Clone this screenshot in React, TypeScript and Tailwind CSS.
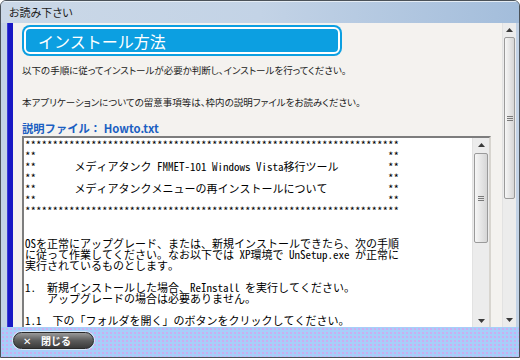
import React from 'react';

const JP = "font-['Noto_Sans_CJK_JP',sans-serif]";
const MONO = "font-['Noto_Sans_Mono_CJK_JP','Noto_Sans_CJK_JP',monospace]";

// 全角を2桁として数える
const cols = (s: string) => [...s].reduce((n, c) => n + (c.charCodeAt(0) < 0x100 ? 1 : 2), 0);
const framed = (s = '') =>
    s ? '**' + ' '.repeat(7) + s + ' '.repeat(57 - cols(s)) + '**' : '**' + ' '.repeat(64) + '**';

const LINES = [
    '*'.repeat(68),
    framed(),
    framed('メディアタンク FMMET-101 Windows Vista移行ツール'),
    framed(),
    framed('メディアタンクメニューの再インストールについて'),
    framed(),
    '*'.repeat(68),
    '',
    '',
    'OSを正常にアップグレード、または、新規インストールできたら、次の手順',
    'に従って作業してください。なお以下では XP環境で UnSetup.exe が正常に',
    '実行されているものとします。',
    '',
    '1.  新規インストールした場合、ReInstall を実行してください。',
    '    アップグレードの場合は必要ありません。',
    '',
    '1.1  下の「フォルダを開く」のボタンをクリックしてください。',
];

function Tri({ up }: { up?: boolean }) {
    return (
        <svg width="7" height="4" viewBox="0 0 7 4">
            <polygon points={up ? '0,4 7,4 3.5,0' : '0,0 7,0 3.5,4'} fill="#3a3a3a" />
        </svg>
    );
}

function Grip() {
    return (
        <div className="flex flex-col gap-[1px] w-[6px]">
            <div className="h-[1px] bg-[#7a7a7a]" />
            <div className="h-[1px] bg-[#7a7a7a]" />
            <div className="h-[1px] bg-[#7a7a7a]" />
        </div>
    );
}

function ScrollBar({ width, thumbTop, thumbHeight, showDown = true }: { width: number; thumbTop: number; thumbHeight: number; showDown?: boolean }) {
    return (
        <div className="h-full flex flex-col bg-[#ececec] border-l border-[#e2e2e2]" style={{ width }}>
            <div className="h-[14px] flex items-center justify-center shrink-0">
                <Tri up />
            </div>
            <div className="flex-1 relative px-[1px]">
                <div
                    className="absolute left-[1px] right-[1px] rounded-[2px] border border-[#9a9a9a] bg-gradient-to-r from-[#f6f6f6] to-[#d6d6d6] flex items-center justify-center"
                    style={{ top: thumbTop, height: thumbHeight }}
                >
                    <Grip />
                </div>
            </div>
            {showDown && (
                <div className="h-[14px] flex items-center justify-center shrink-0">
                    <Tri />
                </div>
            )}
        </div>
    );
}

export default function App() {
    return (
        <div className={`w-[520px] h-[360px] bg-white overflow-hidden ${JP}`}>
            <div className="w-[520px] h-[358px] border border-[#4b5259] rounded-t-[6px] flex flex-col overflow-hidden bg-[#c3d3e6]">

                {/* タイトルバー */}
                <div className="h-[22px] shrink-0 flex items-center pl-[8px] bg-gradient-to-r from-[#cbd8e7] via-[#c3d3e6] to-[#a3bddb] border-t border-[#e4ecf4]">
                    <span className="text-[11px] text-[#1c1c1c] [font-feature-settings:'palt']">お読み下さい</span>
                </div>

                {/* 本体 */}
                <div className="flex-1 flex min-h-0">
                    <div className="w-[6px] bg-[#c3d3e6] shrink-0" />
                    <div className="w-[6px] bg-[#1818c4] border-l border-[#3c3cd2] shrink-0" />

                    <div className="flex-1 bg-[#f4f2ef] pl-[9px] overflow-hidden">
                        {/* 見出し */}
                        <div className="mt-[2px] w-[320px] h-[31px] rounded-[8px] bg-[#0c9fe1] p-[2px]">
                            <div className="h-full rounded-[6px] border-2 border-white bg-[#0c9fe1] flex items-center pl-[12px]">
                                <span className="text-white text-[16px] leading-none">インストール方法</span>
                            </div>
                        </div>

                        <p className="mt-[7px] text-[9.5px] leading-[14px] text-[#222] [font-feature-settings:'palt']">
                            以下の手順に従ってインストールが必要か判断し、インストールを行ってください。
                        </p>
                        <p className="mt-[18px] text-[9.5px] leading-[14px] text-[#222] [font-feature-settings:'palt']">
                            本アプリケーションについての留意事項等は、枠内の説明ファイルをお読みください。
                        </p>
                        <p className="mt-[11px] text-[11.3px] leading-[16px] font-bold text-[#1b5fc2]">
                            説明ファイル： Howto.txt
                        </p>

                        {/* 説明ファイル枠 */}
                        <div className="w-[469px] h-[194px] border-2 border-t-[#7d7d7d] border-l-[#7d7d7d] border-r-[#d8d5cf] border-b-[#d8d5cf] bg-white flex">
                            <pre className={`flex-1 pl-[1px] pt-[1px] text-[11px] leading-[11px] text-black ${MONO}`}>
                                {LINES.join('\n')}
                            </pre>
                            <ScrollBar width={17} thumbTop={1} thumbHeight={90} />
                        </div>
                    </div>

                    {/* 外側スクロールバー */}
                    <ScrollBar width={14} thumbTop={0} thumbHeight={162} />
                    <div className="w-[3px] bg-[#c3d3e6] shrink-0" />
                </div>

                {/* 下部バー */}
                <div className="h-[30px] shrink-0 bg-[#a7cef9] bg-[radial-gradient(circle,#d7a3ee_0.6px,transparent_1px)] bg-[length:4px_4px] pl-[12px] pt-[5px]">
                    <button className="w-[81px] h-[17px] rounded-full border border-[#2a2a2a] bg-gradient-to-b from-[#9a9a9a] via-[#5c5c5c] to-[#3a3a3a] shadow-[0_0_0_1px_#d8e6f6] flex items-center pl-[9px] text-white">
                        <span className="text-[10px] leading-none">✕</span>
                        <span className="ml-[10px] text-[10px] leading-none font-bold">閉じる</span>
                    </button>
                </div>
            </div>
        </div>
    );
}
